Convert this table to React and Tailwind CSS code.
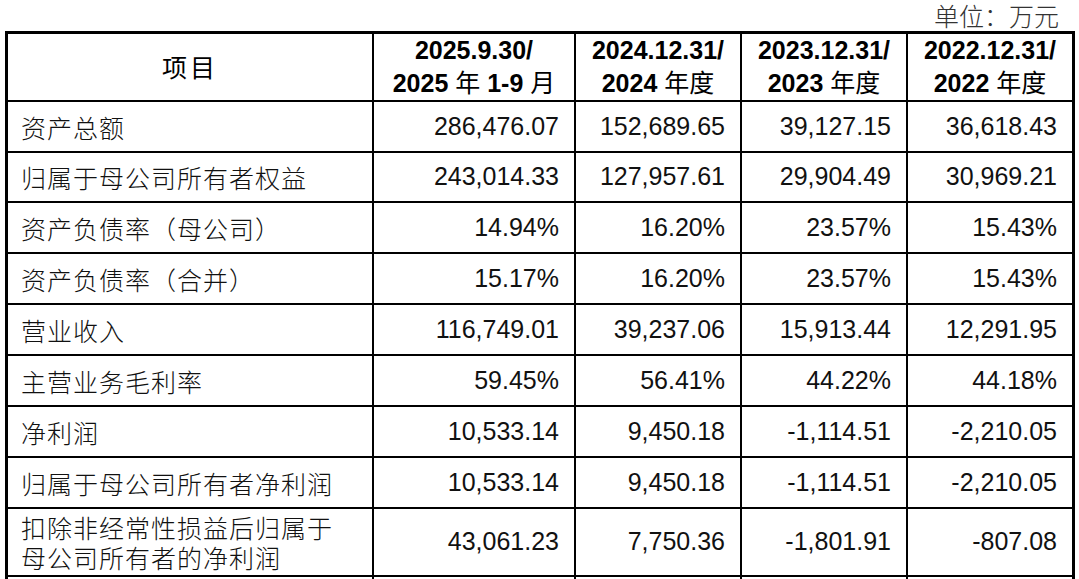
import React from "react";

const rows = [
  ["资产总额", "286,476.07", "152,689.65", "39,127.15", "36,618.43"],
  ["归属于母公司所有者权益", "243,014.33", "127,957.61", "29,904.49", "30,969.21"],
  ["资产负债率（母公司）", "14.94%", "16.20%", "23.57%", "15.43%"],
  ["资产负债率（合并）", "15.17%", "16.20%", "23.57%", "15.43%"],
  ["营业收入", "116,749.01", "39,237.06", "15,913.44", "12,291.95"],
  ["主营业务毛利率", "59.45%", "56.41%", "44.22%", "44.18%"],
  ["净利润", "10,533.14", "9,450.18", "-1,114.51", "-2,210.05"],
  ["归属于母公司所有者净利润", "10,533.14", "9,450.18", "-1,114.51", "-2,210.05"],
];

const widths = ["w-[366px]", "w-[202px]", "w-[166px]", "w-[166px]", "w-[164px]"];
const borders = ["border-r-2", "border-r-2", "border-r-2", "border-r-2", ""];

function Cell({ i, h, children, className = "" }) {
  return (
    <div
      className={`${widths[i]} ${h} ${borders[i]} border-black shrink-0 flex items-center ${className}`}
    >
      {children}
    </div>
  );
}

const B = ({ children }) => <span className="font-bold">{children}</span>;

export default function App() {
  const label = "text-[25px] leading-[30px] tracking-[1px] font-light text-[#111] pl-[13px] font-['Noto_Sans_CJK_SC',sans-serif]";
  const num = "justify-end pr-[15px] text-[25px] text-[#111] font-['Liberation_Sans',Arial,sans-serif]";
  const head =
    "flex-col justify-center text-center text-[25px] leading-[33px] text-black font-['Liberation_Sans','Noto_Sans_CJK_SC',sans-serif]";
  return (
    <div className="w-[1079px] h-[579px] overflow-hidden bg-white">
      <div className="h-[31px] flex justify-end items-start pr-[20px] pt-[2px]">
        <span className="text-[25px] leading-[26px] text-[#333] font-light font-['Noto_Sans_CJK_SC',sans-serif]">
          单位：万元
        </span>
      </div>
      <div className="ml-[5px] w-[1070px] border-[3px] border-b-0 border-black flex flex-col">
        <div className="flex border-b-2 border-black">
          <Cell i={0} h="h-[66px]" className="justify-center">
            <span className="text-[25px] font-normal text-black font-['Noto_Sans_CJK_SC',sans-serif] tracking-[3px]">
              项目
            </span>
          </Cell>
          <Cell i={1} h="h-[66px]" className={head}>
            <div><B>2025.9.30/</B></div>
            <div>
              <B>2025</B> 年 <B>1-9</B> 月
            </div>
          </Cell>
          <Cell i={2} h="h-[66px]" className={head}>
            <div><B>2024.12.31/</B></div>
            <div>
              <B>2024</B> 年度
            </div>
          </Cell>
          <Cell i={3} h="h-[66px]" className={head}>
            <div><B>2023.12.31/</B></div>
            <div>
              <B>2023</B> 年度
            </div>
          </Cell>
          <Cell i={4} h="h-[66px]" className={head}>
            <div><B>2022.12.31/</B></div>
            <div>
              <B>2022</B> 年度
            </div>
          </Cell>
        </div>
        {rows.map((r, ri) => (
          <div key={ri} className="flex border-b-2 border-black">
            {r.map((c, ci) => (
              <Cell key={ci} i={ci} h={ri === 1 ? "h-[48px]" : "h-[49px]"} className={ci === 0 ? label : num}>
                {c}
              </Cell>
            ))}
          </div>
        ))}
        <div className="flex border-b-2 border-black">
          <Cell i={0} h="h-[66px]" className={label}>
            <div>
              <div>扣除非经常性损益后归属于</div>
              <div>母公司所有者的净利润</div>
            </div>
          </Cell>
          {["43,061.23", "7,750.36", "-1,801.91", "-807.08"].map((c, ci) => (
            <Cell key={ci} i={ci + 1} h="h-[66px]" className={num}>
              {c}
            </Cell>
          ))}
        </div>
        <div className="flex">
          {[0, 1, 2, 3, 4].map((i) => (
            <Cell key={i} i={i} h="h-[40px]" />
          ))}
        </div>
      </div>
    </div>
  );
}
